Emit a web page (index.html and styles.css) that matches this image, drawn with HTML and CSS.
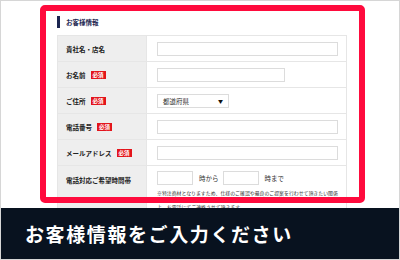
FILE: index.html
```html
<!DOCTYPE html>
<html lang="ja">
<head>
    <meta charset="UTF-8">
    <meta name="viewport" content="width=device-width, initial-scale=1.0">
    <title>お客様情報</title>
    <link rel="stylesheet" href="styles.css">
</head>
<body>
    <div class="card">
        <div class="shot">
            <div class="form">
                <h3 class="form-title">お客様情報</h3>
                <table class="form-table">
                    <tr>
                        <th>貴社名・店名</th>
                        <td><span class="field wide"></span></td>
                    </tr>
                    <tr>
                        <th>お名前<span class="req">必須</span></th>
                        <td><span class="field mid"></span></td>
                    </tr>
                    <tr>
                        <th>ご住所<span class="req">必須</span></th>
                        <td><span class="field select">都道府県<i class="arrow">▼</i></span></td>
                    </tr>
                    <tr>
                        <th>電話番号<span class="req">必須</span></th>
                        <td><span class="field wide"></span></td>
                    </tr>
                    <tr>
                        <th>メールアドレス<span class="req">必須</span></th>
                        <td><span class="field wide"></span></td>
                    </tr>
                    <tr class="time-row">
                        <th>電話対応ご希望時間帯</th>
                        <td>
                            <div class="time">
                                <span class="field small"></span>
                                <span class="unit">時から</span>
                                <span class="field small"></span>
                                <span class="unit">時まで</span>
                            </div>
                            <p class="note">※特注商材となりますため、仕様のご確認や最良のご提案を行わせて頂きたい関係上、お電話にてご連絡させて頂きます。</p>
                        </td>
                    </tr>
                </table>
            </div>
            <div class="highlight"></div>
        </div>
        <div class="caption">お客様情報をご入力ください</div>
    </div>
</body>
</html>
```

FILE: styles.css
```css
* {
    box-sizing: border-box;
}
body {
    margin: 0;
    font-family: "Noto Sans CJK JP", "Noto Sans", sans-serif;
    background: #fff;
}
.card {
    width: 400px;
    height: 260px;
    border: 1px solid #d6d6d6;
    display: flex;
    flex-direction: column;
    overflow: hidden;
}
.shot {
    position: relative;
    flex: 1;
    overflow: hidden;
    background: #fff;
}
.form {
    padding: 15px 0 0 56px;
}
.form-title {
    margin: 0 0 7px;
    height: 12px;
    border-left: 3px solid #1b2550;
    padding-left: 6px;
    font-size: 6.5px;
    line-height: 12px;
    font-weight: bold;
    color: #1b2550;
}
.form-table {
    width: 290px;
    border-collapse: collapse;
}
.form-table th,
.form-table td {
    border: 1px solid #e6e6e6;
    height: 26px;
    vertical-align: middle;
}
.form-table th {
    width: 89px;
    background: #eeeeee;
    text-align: left;
    padding: 0 0 0 8px;
    font-size: 6.5px;
    font-weight: bold;
    color: #222;
    white-space: nowrap;
}
.form-table td {
    padding: 0 0 0 10px;
    background: #fff;
}
.req {
    display: inline-block;
    margin-left: 5px;
    padding: 0 2px;
    height: 8px;
    line-height: 8px;
    background: #e3141b;
    color: #fff;
    font-size: 5.5px;
    vertical-align: 1px;
}
.field {
    display: flex;
    align-items: center;
    height: 14px;
    border: 1px solid #dcdcdc;
    background: #fff;
}
.wide {
    width: 181px;
}
.mid {
    width: 128px;
}
.select {
    width: 72px;
    padding: 0 5px;
    justify-content: space-between;
    font-size: 6.5px;
    color: #333;
}
.arrow {
    font-style: normal;
    font-size: 5px;
    color: #111;
}
.small {
    width: 36px;
}
.time-row th {
    vertical-align: top;
    padding-top: 9px;
}
.time-row td {
    vertical-align: top;
    padding-top: 5px;
}
.time {
    display: flex;
    align-items: center;
}
.unit {
    font-size: 6.5px;
    color: #333;
    margin: 0 4px 0 6px;
}
.note {
    margin: 1px 0 0;
    width: 182px;
    font-size: 4.9px;
    line-height: 14px;
    color: #333;
}
.highlight {
    position: absolute;
    left: 39px;
    top: 4px;
    width: 325px;
    height: 198px;
    border: 6px solid #ff0b3d;
    border-radius: 5px;
}
.caption {
    height: 51px;
    flex-shrink: 0;
    background: #08121f;
    color: #fff;
    font-size: 19px;
    font-weight: bold;
    letter-spacing: 1.6px;
    line-height: 51px;
    padding-left: 24px;
}
```
